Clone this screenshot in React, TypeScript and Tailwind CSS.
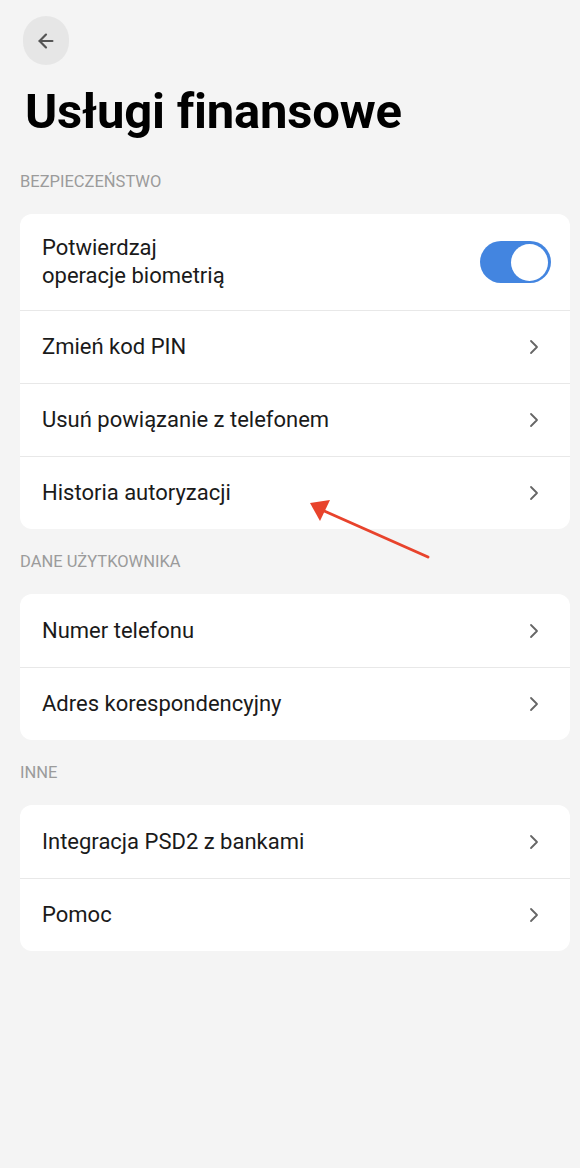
import { ArrowLeft, ChevronRight } from "lucide-react";

type Row = { label: string; toggle?: boolean };

const sections: { title: string; rows: Row[] }[] = [
  {
    title: "BEZPIECZEŃSTWO",
    rows: [
      { label: "Potwierdzaj\noperacje biometrią", toggle: true },
      { label: "Zmień kod PIN" },
      { label: "Usuń powiązanie z telefonem" },
      { label: "Historia autoryzacji" },
    ],
  },
  {
    title: "DANE UŻYTKOWNIKA",
    rows: [{ label: "Numer telefonu" }, { label: "Adres korespondencyjny" }],
  },
  {
    title: "INNE",
    rows: [{ label: "Integracja PSD2 z bankami" }, { label: "Pomoc" }],
  },
];

function Toggle() {
  return (
    <div className="flex h-[42px] w-[71px] items-center justify-end rounded-full bg-[#4385e0] px-[3px]">
      <div className="h-[37px] w-[37px] rounded-full bg-white" />
    </div>
  );
}

export default function App() {
  return (
    <div className="relative flex min-h-[1168px] flex-col bg-[#f4f4f4] pb-10 pl-5 pr-[10px] pt-4 font-['Roboto',sans-serif]">
      <button className="ml-[3px] flex h-[49px] w-[46px] items-center justify-center rounded-full bg-[#e6e6e6] text-[#555]">
        <ArrowLeft className="h-[22px] w-[22px]" strokeWidth={2.4} aria-hidden />
      </button>

      <h1 className="mb-[7px] mt-[17px] pl-[5px] text-[49px] font-bold leading-[60px] tracking-[-0.2px] text-black">
        Usługi finansowe
      </h1>

      {sections.map((section) => (
        <section key={section.title}>
          <p className="mb-[24px] mt-[25px] text-[16.5px] leading-[16px] text-[#9b9b9b]">
            {section.title}
          </p>
          <div className="overflow-hidden rounded-xl bg-white">
            {section.rows.map((row, i) => (
              <div
                key={row.label}
                className={`flex items-center justify-between pl-[22px] ${
                  row.toggle ? "h-[96px] pr-[19px]" : "h-[73px] pr-[24px]"
                } ${i > 0 ? "border-t border-[#e8e8e8]" : ""}`}
              >
                <span className="whitespace-pre-line text-[22px] leading-[28px] text-[#1a1a1a]">
                  {row.label}
                </span>
                {row.toggle ? (
                  <Toggle />
                ) : (
                  <ChevronRight className="h-6 w-6 text-[#666]" strokeWidth={1.8} aria-hidden />
                )}
              </div>
            ))}
          </div>
        </section>
      ))}

      <svg
        className="pointer-events-none absolute left-0 top-0"
        width="580"
        height="600"
        viewBox="0 0 580 600"
        aria-hidden
      >
        <line x1="428" y1="557" x2="322" y2="510" stroke="#e8432c" strokeWidth="3" strokeLinecap="round" />
        <polygon points="310,503 330,500 320,521" fill="#e8432c" />
      </svg>
    </div>
  );
}
